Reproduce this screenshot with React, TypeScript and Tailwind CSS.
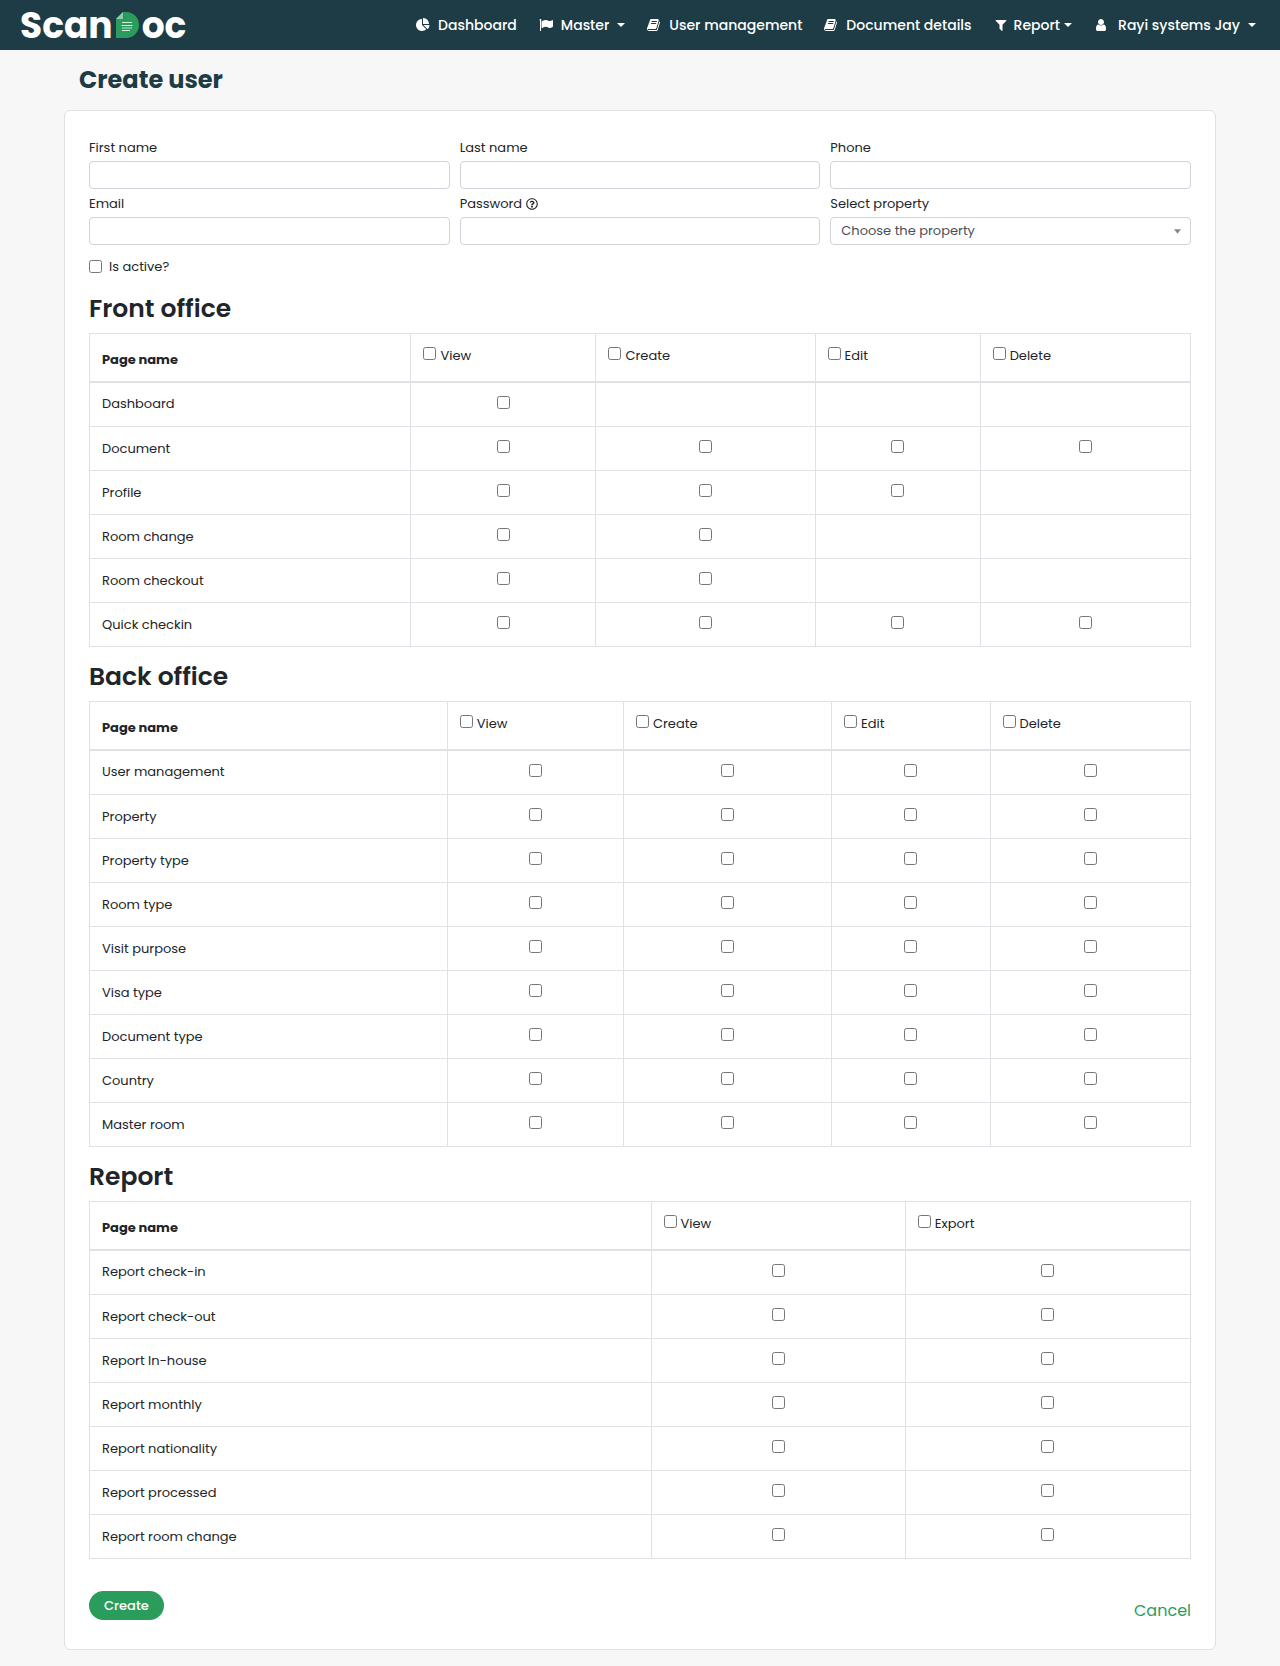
import { type ReactNode } from "react";
import { FaRegQuestionCircle } from "react-icons/fa";

const icons = {
  pie: "M768 890l546 546q-106 108-247.500 168t-298.500 60q-209 0-385.500-103t-279.500-279.500-103-385.500 103-385.500 279.500-279.500 385.500-103v762zm187 6h773q0 157-60 298.500t-168 247.500zm709-128h-768v-768q209 0 385.500 103t279.500 279.500 103 385.500z",
  flag: "M320 256q0 72-64 110v1266q0 13-9.500 22.500t-22.500 9.500h-64q-13 0-22.500-9.500t-9.500-22.500v-1266q-64-38-64-110 0-53 37.500-90.500t90.500-37.500 90.500 37.500 37.500 90.500zm1472 64v763q0 25-12.500 38.500t-39.500 27.500q-215 116-369 116-61 0-123.500-22t-108.500-48-115.500-48-142.500-22q-192 0-464 146-17 9-33 9-26 0-45-19t-19-45v-742q0-32 31-55 21-14 79-43 236-120 421-120 107 0 200 29t219 88q38 19 88 19 54 0 117.500-21t110-47 88-47 54.500-21q26 0 45 19t19 45z",
  book: "M1639 478q40 57 18 129l-275 906q-19 64-76.500 107.500t-122.500 43.500h-923q-77 0-148.500-53.500t-99.500-131.500q-24-67-2-127 0-4 3-27t4-37q1-8-3-21.500t-3-19.500q2-11 8-21t16.500-23.500 16.500-23.500q23-38 45-91.500t30-91.500q3-10 .5-30t-.5-28q3-11 17-28t17-23q21-36 42-92t25-90q1-9-2.500-32t.5-28q4-13 22-30.500t22-22.500q19-26 42.500-84.500t27.500-96.500q1-8-3-25.500t-2-26.500q2-8 9-18t18-23 17-21q8-12 16.500-30.500t15-35 16-36 19.500-32 26.500-23.500 36-11.500 47.500 5.500l-1 3q38-9 51-9h761q74 0 114 56t18 130l-274 906q-36 119-71.500 153.500t-128.500 34.500h-869q-27 0-38 15-11 16-1 43 24 70 144 70h923q29 0 56-15.500t35-41.500l300-987q7-22 5-57 38 15 59 43zm-1064 2q-4 13 2 22.500t20 9.500h608q13 0 25.500-9.500t16.500-22.500l21-64q4-13-2-22.500t-20-9.500h-608q-13 0-25.500 9.500t-16.500 22.500zm-83 256q-4 13 2 22.500t20 9.500h608q13 0 25.500-9.500t16.500-22.500l21-64q4-13-2-22.500t-20-9.500h-608q-13 0-25.500 9.500t-16.500 22.500z",
  filter: "M1595 295q17 41-14 70l-493 493v742q0 42-39 59-13 5-25 5-27 0-45-19l-256-256q-19-19-19-45v-486l-493-493q-31-29-14-70 17-39 59-39h1280q42 0 59 39z",
  user: "M1536 1399q0 109-62.500 187t-150.500 78h-854q-88 0-150.500-78t-62.500-187q0-85 8.500-160.500t31.500-152 58.500-131 94-89 134.500-34.500q131 128 313 128t313-128q76 0 134.500 34.500t94 89 58.500 131 31.500 152 8.500 160.500zm-256-887q0 159-112.500 271.500t-271.500 112.500-271.500-112.500-112.500-271.500 112.500-271.500 271.500-112.500 271.500 112.500 112.500 271.500z",
};

function NavIcon({ name }: { name: keyof typeof icons }) {
  return (
    <svg viewBox="0 0 1792 1792" className="size-[14px] shrink-0 fill-current" aria-hidden="true">
      <path d={icons[name]} />
    </svg>
  );
}

function Caret() {
  return (
    <svg viewBox="0 0 8 4" className="h-1 w-2 shrink-0 fill-current" aria-hidden="true">
      <path d="M0 0h8L4 4z" />
    </svg>
  );
}

function Logo() {
  return (
    <a href="#home" aria-label="ScanDoc" className="flex items-center text-[36px] leading-[48px] font-bold text-white">
      <span className="pt-0.5">Scan</span>
      <svg viewBox="0 0 23 26" className="mx-[3px] h-[26px] w-[23px]" aria-hidden="true">
        <path d="M7 0h3a13 13 0 0 1 0 26H0V7z" fill="#2a9d5d" />
        <path d="M7 0v7H0z" fill="#8fcdaa" />
        <path d="M7 7h4L7 3z" fill="#1f7f49" opacity=".5" />
        <path d="M6 10.500h10M5.500 13.500h11M6 18.500h8" stroke="#d7efe1" strokeWidth="1" />
        <path d="M6 16h10" stroke="#8fcdaa" strokeWidth="1.500" />
      </svg>
      <span className="pt-0.5">oc</span>
    </a>
  );
}

const labelClass = "flex h-6 items-center gap-1 pt-0.5";
const fieldClass = "block h-7 w-full rounded border border-[#ced4da] bg-white px-2.5";

function Field({ id, label, type = "text", hint }: { id: string; label: string; type?: string; hint?: ReactNode }) {
  return (
    <div className="flex flex-col gap-0.5">
      <label htmlFor={id} className={labelClass}>
        {label}
        {hint}
      </label>
      <input id={id} type={type} className={fieldClass} />
    </div>
  );
}

type Section = {
  title: string;
  actions: string[];
  widths: string[];
  rows: [string, number[]][];
};

const sections: Section[] = [
  {
    title: "Front office",
    actions: ["View", "Create", "Edit", "Delete"],
    widths: ["w-[29.2%]", "w-[16.8%]", "w-[19.9%]", "w-[15%]", "w-[19.1%]"],
    rows: [
      ["Dashboard", [1, 0, 0, 0]],
      ["Document", [1, 1, 1, 1]],
      ["Profile", [1, 1, 1, 0]],
      ["Room change", [1, 1, 0, 0]],
      ["Room checkout", [1, 1, 0, 0]],
      ["Quick checkin", [1, 1, 1, 1]],
    ],
  },
  {
    title: "Back office",
    actions: ["View", "Create", "Edit", "Delete"],
    widths: ["w-[32.5%]", "w-[16%]", "w-[18.9%]", "w-[14.4%]", "w-[18.2%]"],
    rows: [
      "User management",
      "Property",
      "Property type",
      "Room type",
      "Visit purpose",
      "Visa type",
      "Document type",
      "Country",
      "Master room",
    ].map((name) => [name, [1, 1, 1, 1]]),
  },
  {
    title: "Report",
    actions: ["View", "Export"],
    widths: ["w-[51%]", "w-[23.1%]", "w-[25.9%]"],
    rows: [
      "Report check-in",
      "Report check-out",
      "Report In-house",
      "Report monthly",
      "Report nationality",
      "Report processed",
      "Report room change",
    ].map((name) => [name, [1, 1]]),
  },
];

function PermissionTable({ section }: { section: Section }) {
  return (
    <section>
      <h2 className="pt-3 pb-1.5 text-[25px] leading-9 font-semibold">{section.title}</h2>
      <table className="w-full table-fixed border-collapse border border-[#dee2e6]">
        <colgroup>
          {section.widths.map((width, i) => (
            <col key={i} className={width} />
          ))}
        </colgroup>
        <thead>
          <tr className="h-12 border-b-2 border-[#dee2e6]">
            <th scope="col" className="border-x border-[#dee2e6] px-3 pt-1.5 text-left font-bold">
              Page name
            </th>
            {section.actions.map((action) => (
              <th key={action} scope="col" className="border-x border-[#dee2e6] px-3 pb-0.5 text-left font-normal">
                <label className="flex items-center gap-1">
                  <input type="checkbox" className="mb-1.5 size-[13px]" />
                  {action}
                </label>
              </th>
            ))}
          </tr>
        </thead>
        <tbody>
          {section.rows.map(([name, cells]) => (
            <tr key={name} className="h-11 first:h-[45px]">
              <th scope="row" className="border border-[#dee2e6] px-3 text-left font-normal">
                {name}
              </th>
              {cells.map((on, i) => (
                <td key={i} className="border border-[#dee2e6] px-3">
                  {on === 1 && (
                    <input
                      type="checkbox"
                      aria-label={`${name}: ${section.actions[i]}`}
                      className="mx-auto mb-1 block size-[13px]"
                    />
                  )}
                </td>
              ))}
            </tr>
          ))}
        </tbody>
      </table>
    </section>
  );
}

export default function App() {
  return (
    <div className="min-h-screen bg-[#f7f7f7] pb-4 font-[Poppins,Inter,sans-serif] text-[13px] leading-5 text-[#212529]">
      <header className="flex h-[50px] items-center justify-between bg-[#1d3c45] pr-6 pl-5">
        <Logo />
        <nav className="flex items-center gap-[22px] text-[14px] font-medium whitespace-nowrap text-white">
          <a href="#dashboard" className="flex items-center gap-2">
            <NavIcon name="pie" />
            Dashboard
          </a>
          <button type="button" className="flex items-center gap-2">
            <NavIcon name="flag" />
            Master
            <Caret />
          </button>
          <a href="#users" className="flex items-center gap-2">
            <NavIcon name="book" />
            User management
          </a>
          <a href="#documents" className="flex items-center gap-2">
            <NavIcon name="book" />
            Document details
          </a>
          <button type="button" className="flex items-center gap-1">
            <span className="flex items-center gap-1.5">
              <NavIcon name="filter" />
              Report
            </span>
            <Caret />
          </button>
          <button type="button" className="flex items-center gap-2">
            <span className="flex items-center gap-2.5">
              <NavIcon name="user" />
              Rayi systems Jay
            </span>
            <Caret />
          </button>
        </nav>
      </header>

      <main className="mx-[5%]">
        <h1 className="px-[15px] py-3.5 text-[24px] leading-8 font-bold text-[#1d3c45]">Create user</h1>
        <form className="rounded-md border border-[#dee2e6] bg-white p-6">
          <div className="grid grid-cols-3 gap-x-2.5 gap-y-0.5">
            <Field id="first-name" label="First name" />
            <Field id="last-name" label="Last name" />
            <Field id="phone" label="Phone" type="tel" />
            <Field id="email" label="Email" type="email" />
            <Field
              id="password"
              label="Password"
              type="password"
              hint={<FaRegQuestionCircle className="size-3" aria-hidden="true" />}
            />
            <div className="flex flex-col gap-0.5">
              <label htmlFor="property" className={labelClass}>
                Select property
              </label>
              <div className="relative">
                <select id="property" className={`${fieldClass} appearance-none text-[#495057]`}>
                  <option>Choose the property</option>
                </select>
                <svg
                  viewBox="0 0 8 5"
                  className="pointer-events-none absolute top-3 right-2.5 h-[5px] w-[7px] fill-[#888888]"
                  aria-hidden="true"
                >
                  <path d="M0 0h8L4 5z" />
                </svg>
              </div>
            </div>
          </div>
          <label className="mt-3 mb-0.5 flex w-fit items-center gap-[7px]">
            <input type="checkbox" className="mb-0.5 size-[13px]" />
            Is active?
          </label>

          {sections.map((section) => (
            <PermissionTable key={section.title} section={section} />
          ))}

          <div className="flex items-start justify-between pt-8 pb-0.5">
            <button type="submit" className="h-[29px] rounded-full bg-[#2a9d5d] px-[15px] font-medium text-white">
              Create
            </button>
            <a href="#cancel" className="mt-2 text-[16px] leading-6 text-[#2a9d5d]">
              Cancel
            </a>
          </div>
        </form>
      </main>
    </div>
  );
}
